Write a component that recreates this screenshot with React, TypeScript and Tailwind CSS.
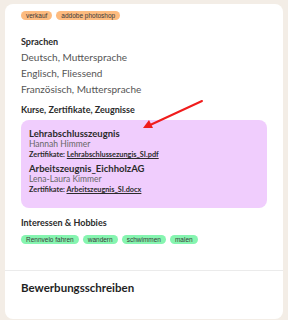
import React from 'react';

const skills = ['verkauf', 'addobe photoshop'];
const languages = ['Deutsch, Muttersprache', 'Englisch, Fliessend', 'Französisch, Muttersprache'];
const hobbies = ['Rennvelo fahren', 'wandern', 'schwimmen', 'malen'];

const certificates = [
  { title: 'Lehrabschlusszeugnis', person: 'Hannah Himmer', file: 'Lehrabschlussezungis_SI.pdf' },
  { title: 'Arbeitszeugnis_EichholzAG', person: 'Lena-Laura Kimmer', file: 'Arbeitszeugnis_SI.docx' },
];

const Tag: React.FC<{ label: string; color: string }> = ({ label, color }) => (
  <span className={`rounded-full px-[5px] text-[6.5px] leading-[9px] text-[#3a3a3a] font-['Liberation_Sans',sans-serif] ${color}`}>
    {label}
  </span>
);

const App: React.FC = () => {
  return (
    <div className="relative min-h-[320px] w-[288px] bg-[#f3ede6] px-[5px] pt-[4px] font-['Lato',sans-serif]">
      <div className="rounded-[8px] bg-white">
        <div className="px-[16px] pt-[7px]">
          <div className="flex gap-[4px]">
            {skills.map((s) => (
              <Tag key={s} label={s} color="bg-[#fdbb7f]" />
            ))}
          </div>

          <h3 className="mt-[16px] text-[9px] font-bold leading-[12px] text-[#2b2b2b]">Sprachen</h3>
          <div className="mt-[1px]">
            {languages.map((l) => (
              <p key={l} className="text-[10px] leading-[16px] text-[#555]">
                {l}
              </p>
            ))}
          </div>

          <h3 className="mt-[7px] text-[9px] font-bold leading-[12px] text-[#2b2b2b]">
            Kurse, Zertifikate, Zeugnisse
          </h3>
          <div className="mt-[4px] rounded-[8px] bg-[#f0cdfd] px-[8px] pb-[13px] pt-[9px]">
            {certificates.map((c, i) => (
              <div key={c.title} className={i > 0 ? 'mt-[4px]' : ''}>
                <p className="text-[9.5px] font-bold leading-[10px] text-[#2b2b2b]">{c.title}</p>
                <p className="text-[8.5px] leading-[10px] text-[#666]">{c.person}</p>
                <p className="mt-[1px] text-[7.3px] font-bold leading-[10px] text-[#2b2b2b]">
                  Zertifikate: <span className="underline">{c.file}</span>
                </p>
              </div>
            ))}
          </div>

          <h3 className="mt-[9px] text-[9px] font-bold leading-[12px] text-[#2b2b2b]">Interessen &amp; Hobbies</h3>
          <div className="mt-[6px] flex gap-[4px] pb-[26px]">
            {hobbies.map((h) => (
              <Tag key={h} label={h} color="bg-[#86f5b0]" />
            ))}
          </div>
        </div>
        <div className="border-t border-[#ebebeb] px-[16px] pb-[23px] pt-[9px]">
          <h2 className="text-[11.5px] font-bold leading-[16px] text-[#1f1f1f]">Bewerbungsschreiben</h2>
        </div>
      </div>

      {/* annotation arrow */}
      <svg className="absolute left-[140px] top-[98px]" width="66" height="34" viewBox="0 0 66 34">
        <line x1="62" y1="3" x2="8" y2="28" stroke="#f01c1c" strokeWidth="2" strokeLinecap="round" />
        <polygon points="3,30 9,22 13,30" fill="#f01c1c" />
      </svg>
    </div>
  );
};

export default App;
